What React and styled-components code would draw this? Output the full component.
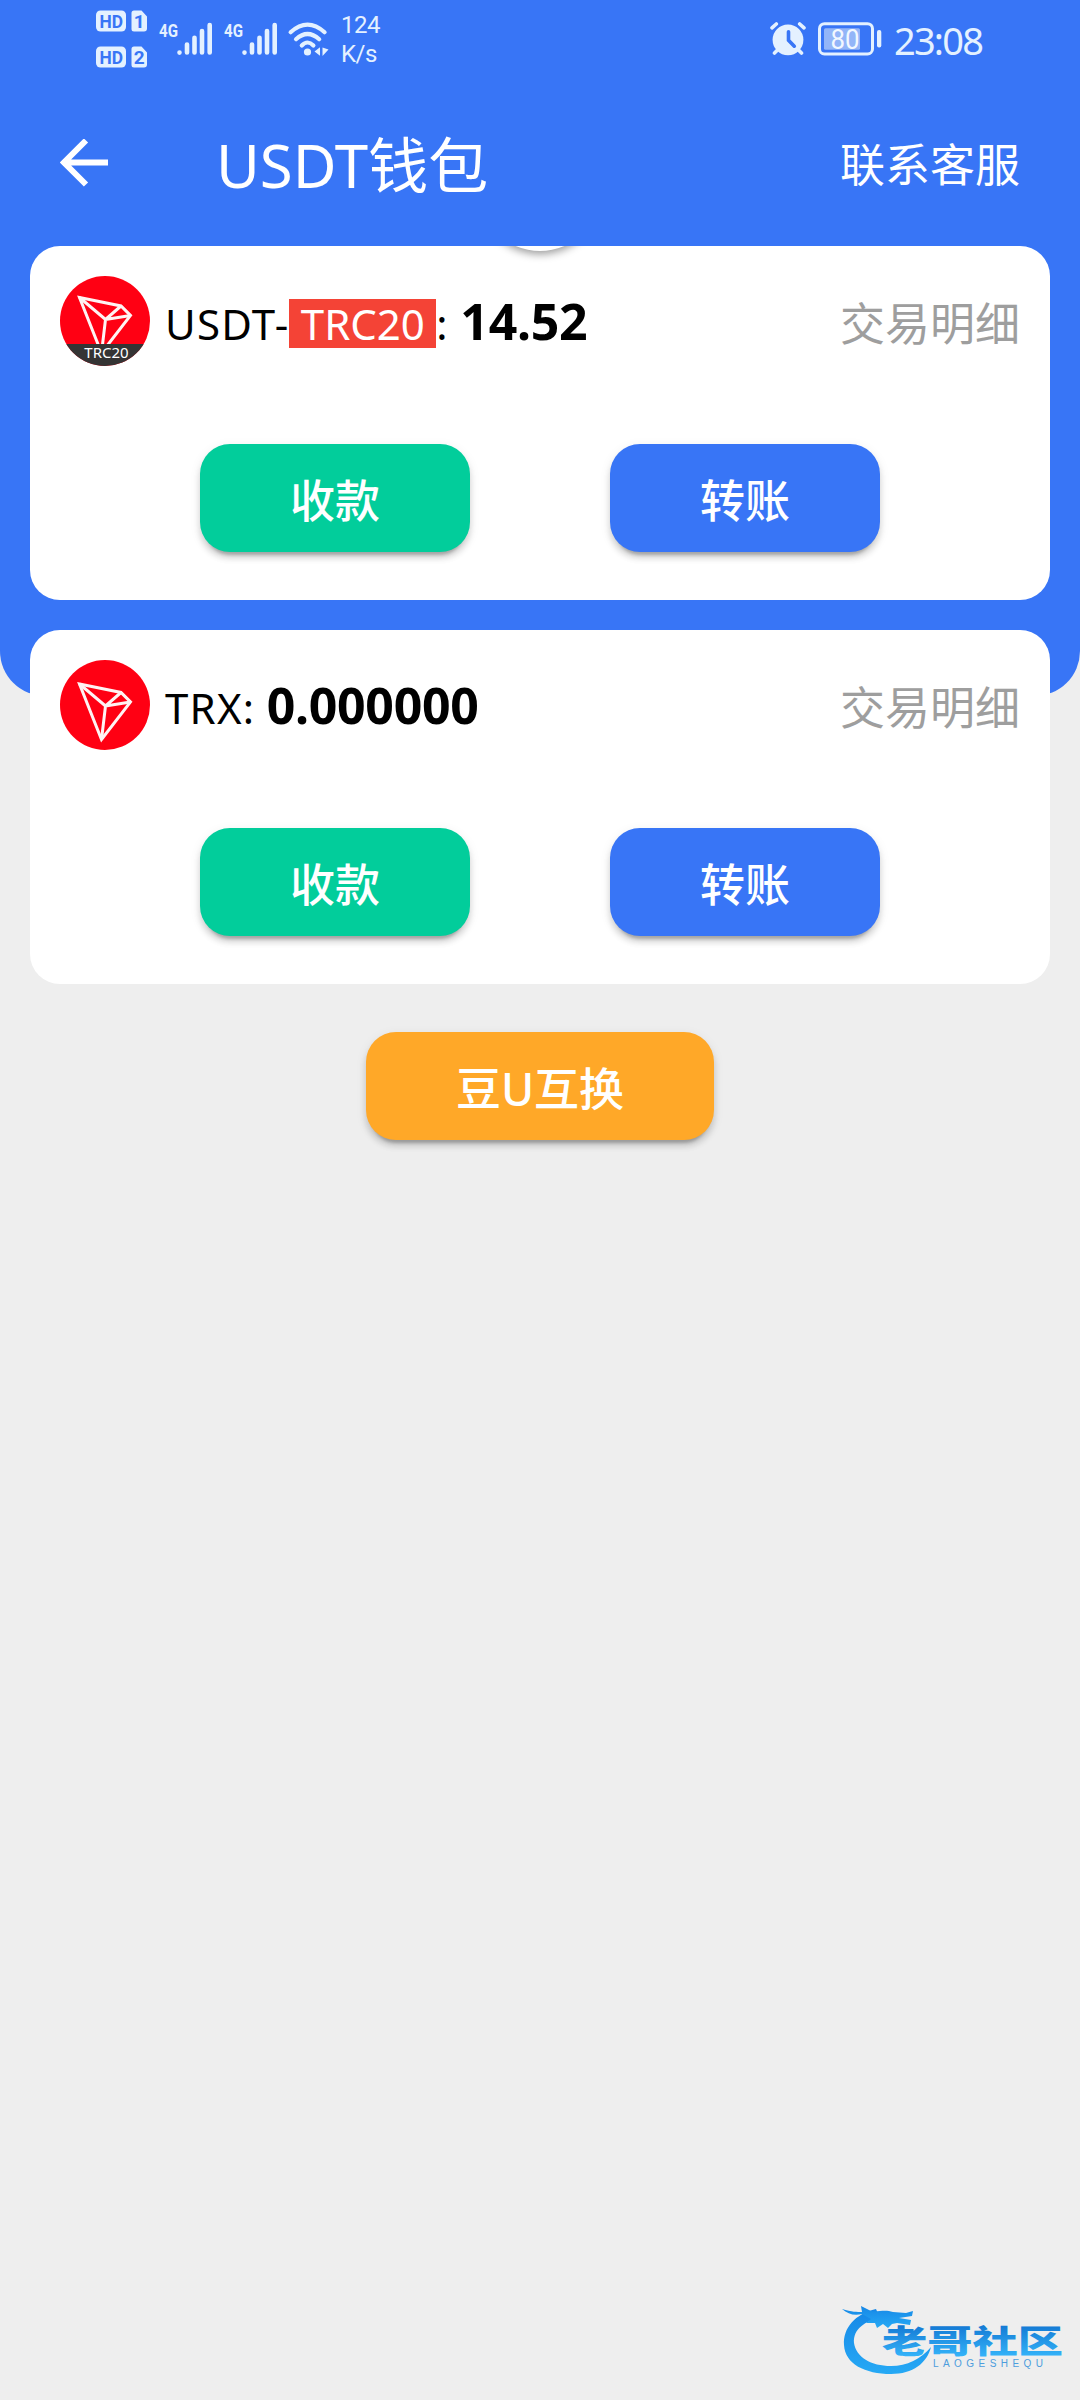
import React from 'react';
import styled, { createGlobalStyle } from 'styled-components';

const BLUE = '#3875f6';
const ICE = '#e4f1ff';

const wallets = [
    { id: 'usdt', name: 'USDT-', tag: 'TRC20', amount: '14.52' },
    { id: 'trx', name: 'TRX', amount: '0.000000' }
];

export default () => {
    return (
        <Page>
            <GlobalStyle />
            <Hero>
                <StatusBar />
                <TitleBar>
                    <BackArrow />
                    <Title>USDT钱包</Title>
                    <Contact>联系客服</Contact>
                </TitleBar>
            </Hero>

            <Body>
                <Refresher />
                {wallets.map(wallet => <WalletCard key={wallet.id} wallet={wallet} />)}
                <SwapButton>豆U互换</SwapButton>
            </Body>

            <Footer>
                <CommunityLogo />
            </Footer>
        </Page>
    )
}

const WalletCard = ({ wallet }) => (
    <Card>
        <CardHead>
            <TronIcon label={wallet.tag} />
            <Coin>
                <span>{wallet.name}</span>
                {wallet.tag && <Tag>{wallet.tag}</Tag>}
                <Colon>:</Colon>
            </Coin>
            <Amount>{wallet.amount}</Amount>
            <Detail>交易明细</Detail>
        </CardHead>
        <Actions>
            <Button $color="#02cd9b">收款</Button>
            <Button $color={BLUE}>转账</Button>
        </Actions>
    </Card>
)

const StatusBar = () => (
    <StatusRow>
        <SimColumn>
            <SimBadge number="1" />
            <SimBadge number="2" />
        </SimColumn>
        <Signal />
        <Signal />
        <Wifi />
        <Speed>
            <span>124</span>
            <span>K/s</span>
        </Speed>
        <Spacer />
        <Alarm />
        <Battery />
        <Clock>23:08</Clock>
    </StatusRow>
)

const SimBadge = ({ number }) => (
    <svg width="51" height="22" viewBox="0 0 51 22">
        <rect x="0" y="0.5" width="30" height="21" rx="4.5" fill={ICE} />
        <path d="M38 0.5h7.500l5.500 6v12a3 3 0 0 1-3 3h-10a2.500 2.500 0 0 1-2.500-2.500v-16a2.500 2.500 0 0 1 2.500-2.500z" fill={ICE} />
        <BadgeText x="3.500" y="17.800" textLength="23.500" lengthAdjust="spacingAndGlyphs">HD</BadgeText>
        <BadgeText x="43.300" y="17.800" textAnchor="middle">{number}</BadgeText>
    </svg>
)

const Signal = () => (
    <SignalIcon width="54" height="34" viewBox="0 0 54 34">
        <NetText x="0" y="15" textLength="19" lengthAdjust="spacingAndGlyphs">4G</NetText>
        <g stroke={ICE} strokeWidth="4.600" strokeLinecap="round">
            <path d="M20.500 30.600v0M28 22.500v8M35.500 15.700v14.800M43 9v21.500M50.700 3v27.500" />
        </g>
    </SignalIcon>
)

const Wifi = () => (
    <WifiIcon width="42" height="36" viewBox="0 0 42 36">
        <g fill="none" stroke={ICE} strokeWidth="4.200" strokeLinecap="round">
            <path d="M2.600 10.200Q19.500-5 36.600 10.200" />
            <path d="M8 17.200Q19.500 6.800 31.200 17.200" />
            <path d="M13.800 23.500Q19.500 17.500 25.400 23.500" />
        </g>
        <circle cx="19.500" cy="30" r="3.600" fill={ICE} />
        <path d="M26.500 29.500l5.500-4.200v8.400zM34.500 25.500v8.500l6-6.500z" fill={ICE} />
    </WifiIcon>
)

const Alarm = () => (
    <svg width="36" height="34" viewBox="0 0 36 34">
        <g stroke={ICE} strokeWidth="3.600" strokeLinecap="round">
            <path d="M2 5.800L6.300 2M29.700 2L34 5.800M7.500 28L4.500 31M28.500 28L31.500 31" />
        </g>
        <circle cx="18" cy="17.800" r="15.400" fill={ICE} />
        <path d="M18.500 9.800v8.400l5.800 6" fill="none" stroke={BLUE} strokeWidth="3.600" strokeLinecap="round" />
    </svg>
)

const Battery = () => (
    <BatteryIcon width="64" height="34" viewBox="0 0 64 34">
        <rect x="1.500" y="1.700" width="53" height="30.300" rx="5" fill="none" stroke={ICE} strokeWidth="3" />
        <rect x="6" y="6.300" width="36" height="21.400" rx="1.500" fill="#93b5f8" />
        <rect x="59" y="8" width="4.300" height="17.500" rx="2" fill={ICE} />
        <BatteryText x="12.500" y="27" textLength="29" lengthAdjust="spacingAndGlyphs">80</BatteryText>
    </BatteryIcon>
)

const BackArrow = () => (
    <svg width="48" height="48" viewBox="0 0 48 48">
        <path d="M26 1.500L4 23.500L26 45.500M4 23.500H48" fill="none" stroke="#fff" strokeWidth="6" />
    </svg>
)

const TronIcon = ({ label }) => (
    <svg width="90" height="90" viewBox="0 0 90 90">
        <clipPath id="coin"><circle cx="45" cy="45" r="45" /></clipPath>
        <g clipPath="url(#coin)">
            <rect width="90" height="90" fill="#ff0013" />
            <g fill="none" stroke="#fff3f3" strokeWidth="3" transform={label ? 'translate(0 -2.500)' : undefined}>
                <path d="M19.500 24L61 32.500L70.500 42L41.500 79.500z" />
                <path d="M19.500 24L45.500 46L61 32.500M45.500 46L70.500 42M45.500 46L41.500 79.500" />
            </g>
            {label && <rect y="68" width="90" height="22" fill="#343434" />}
            {label && <CoinText x="46.500" y="82" textAnchor="middle">{label}</CoinText>}
        </g>
    </svg>
)

// dragon curled around the community name
const CommunityLogo = () => (
    <svg width="240" height="88" viewBox="0 0 240 88">
        <defs>
            <linearGradient id="dragon" x1="0" y1="0" x2="0" y2="1">
                <stop offset="0" stopColor="#1687e6" />
                <stop offset="1" stopColor="#26a9f5" />
            </linearGradient>
            <linearGradient id="name" x1="0" y1="0" x2="0" y2="1">
                <stop offset="0.200" stopColor="#1479d4" />
                <stop offset="0.900" stopColor="#35b5fa" />
            </linearGradient>
        </defs>
        <g fill="url(#dragon)">
            <path d="M36 17C15 22 3 36 4 53C5 72 25 82 51 82C73 82 87 71 91 55C81 67 67 74 51 74C31 74 16 65 14 51C13 37 25 29 40 26z" />
            <path d="M2 17C12 20 17 20 22 20L21 14L31 19C39 20 45 17 53 20L66 21L73 19L72 24L59 26L71 28L70 33L57 31L52 32L48 36L43 32L37 36L35 31L26 31L31 27L22 22C14 24 8 22 2 17z" />
        </g>
        <LogoText x="42" y="61" textLength="181" lengthAdjust="spacingAndGlyphs">老哥社区</LogoText>
        <LogoLatin x="93" y="75" textLength="110">LAOGESHEQU</LogoLatin>
    </svg>
)

const GlobalStyle = createGlobalStyle`
    body {
        margin: 0;
        background: #eeeeee;
        font-family: "Noto Sans", "Noto Sans CJK SC", sans-serif;
    }
    svg {
        display: block;
        flex: none;
    }
`
const Page = styled.div`
    width: 1080px;
    height: 2400px;
    display: flex;
    flex-flow: column;
    overflow: hidden;
    background: #eeeeee;
`
const Hero = styled.div`
    flex: none;
    height: 696px;
    margin: 0px 0px -450px;
    border-radius: 0px 0px 45px 45px;
    background: ${BLUE};
`
const StatusRow = styled.div`
    height: 80px;
    box-sizing: border-box;
    padding: 10px 97px 0px 96px;
    display: flex;
    align-items: flex-start;
    color: ${ICE};

    > svg {
        margin-top: 12px;
    }
`
const SimColumn = styled.div`
    display: flex;
    flex-flow: column;
    gap: 14px;
    margin-right: 12px;
`
const SignalIcon = styled.svg`
    margin-right: 11px;
    overflow: visible;
`
const WifiIcon = styled.svg`
    margin-left: -1px;
    margin-right: 11px;
    overflow: visible;
`
const Speed = styled.div`
    display: flex;
    flex-flow: column;
    font: 24px/29px Roboto, sans-serif;
    letter-spacing: -0.5px;
    margin-top: 1px;
`
const Spacer = styled.div`
    flex: 1;
`
const BatteryIcon = styled.svg`
    margin-left: 12px;
`
const Clock = styled.div`
    margin: 4px 0px 0px 12px;
    width: 89px;
    font-size: 38px;
    line-height: 52px;
    letter-spacing: -1.8px;
    white-space: nowrap;
`
const BadgeText = styled.text`
    font: bold 19px Roboto, sans-serif;
    fill: ${BLUE};
`
const NetText = styled.text`
    font: bold 19px Roboto, sans-serif;
    fill: ${ICE};
`
const BatteryText = styled.text`
    font: 28px Roboto, sans-serif;
    fill: #f2f8ff;
`
const CoinText = styled.text`
    font: 15px "Noto Sans", sans-serif;
    fill: #fff;
`
const TitleBar = styled.div`
    height: 166px;
    padding: 0px 60px;
    display: flex;
    align-items: center;
    color: #fff;
`
const Title = styled.div`
    flex: 1;
    margin-left: 108px;
    padding-top: 4px;
    font-size: 60px;
    line-height: 80px;
`
const Contact = styled.div`
    padding-top: 4px;
    font-size: 45px;
    line-height: 60px;
`
const Body = styled.div`
    flex: 1;
    position: relative;
    overflow: hidden;
    padding: 0px 30px;
    display: flex;
    flex-flow: column;
    align-items: center;
    gap: 30px;
`
// pull-to-refresh disc, resting mostly above the list
const Refresher = styled.div`
    position: absolute;
    top: -119px;
    left: 478px;
    width: 124px;
    height: 124px;
    border-radius: 50%;
    background: #fff;
    box-shadow: 0px 3px 9px rgba(0, 0, 0, 0.4);
    z-index: 1;
`
const Card = styled.div`
    flex: none;
    width: 100%;
    height: 354px;
    box-sizing: border-box;
    padding: 30px;
    border-radius: 30px;
    background: #fff;
`
const CardHead = styled.div`
    height: 90px;
    display: flex;
    align-items: center;
    color: #000;
`
const Coin = styled.div`
    margin-left: 15px;
    display: flex;
    align-items: center;
    font-size: 42px;
    line-height: 49px;
    padding-top: 5px;

    > span:first-child {
        letter-spacing: 1.2px;
    }
`
const Tag = styled.span`
    width: 147px;
    text-align: center;
    background: #f44336;
    color: #fff;
`
const Colon = styled.span`
    width: 12px;
`
const Amount = styled.div`
    flex: 1;
    margin-left: 12px;
    font-size: 50px;
    font-weight: bold;
    line-height: 60px;
    letter-spacing: -0.3px;
`
const Detail = styled.div`
    padding-top: 6px;
    font-size: 45px;
    line-height: 60px;
    color: #9e9e9e;
`
const Actions = styled.div`
    margin-top: 78px;
    display: flex;
    justify-content: space-evenly;
`
const Button = styled.button`
    width: 270px;
    height: 108px;
    padding: 0px;
    border: none;
    border-radius: 30px;
    background: ${({ $color }) => $color};
    box-shadow: 0px 9px 3px -6px rgba(0, 0, 0, 0.2), 0px 6px 6px rgba(0, 0, 0, 0.14), 0px 3px 12px rgba(0, 0, 0, 0.08);
    color: #fff;
    font-family: inherit;
    font-size: 45px;
    font-weight: 500;
`
const SwapButton = styled(Button).attrs({ $color: '#ffa828' })`
    flex: none;
    width: 348px;
    margin-top: 18px;
`
const Footer = styled.div`
    flex: none;
    height: 108px;
    display: flex;
    justify-content: flex-end;
    align-items: flex-start;
`
const LogoText = styled.text`
    font: 900 32px "Noto Sans CJK SC", sans-serif;
    fill: url(#name);
`
const LogoLatin = styled.text`
    font: 10px "Liberation Sans", sans-serif;
    fill: #4d9ddd;
`
